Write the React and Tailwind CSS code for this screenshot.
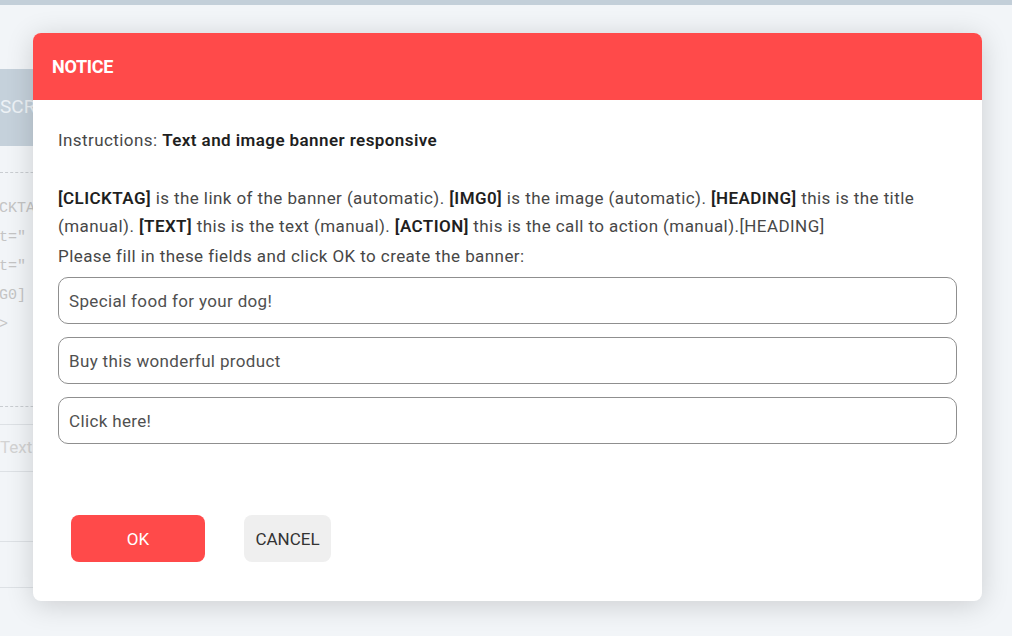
const FONT = { fontFamily: "Roboto, 'Noto Sans', sans-serif" };

const CODE_LINES = ["CKTAG]", "t=\"", "t=\"", "G0]", ">"];

function BackgroundPage() {
    return (
        <div className="min-h-[636px] w-full bg-[#f2f5f8]">
            <div className="h-[5px] bg-[#c3cfd9]" />
            <div className="w-[120px] pt-[64px]">
                <div className="flex h-[77px] items-center bg-[#c5d1db] text-[19px] text-[#edf2f6]">SCRIPT</div>
                <div className="mt-[26px] border-t border-dashed border-[#c9cdd1]" />
                <div className="pt-[21px] font-['Liberation_Mono',monospace] text-[15px] leading-[29px] text-[#c4c4c4]">
                    {CODE_LINES.map((line, i) => (
                        <div key={i} className="-ml-[1px] whitespace-pre">{line}</div>
                    ))}
                </div>
                <div className="mt-[67px] border-t border-dashed border-[#c9cdd1]" />
                <div className="mt-[17px] border-t border-[#dde1e5]" />
                <div className="flex h-[46px] items-center text-[17px] text-[#d3d3d3]">Text</div>
                <div className="border-t border-[#dde1e5]" />
                <div className="mt-[69px] border-t border-[#dde1e5]" />
                <div className="mt-[45px] border-t border-[#dde1e5]" />
            </div>
        </div>
    );
}

function Field({ value }) {
    return (
        <div className="flex h-[47px] items-center rounded-[10px] border border-[#8f8f8f] bg-white px-[10px] text-[17px] tracking-[0.35px] text-[#505050]">
            {value}
        </div>
    );
}

function Strong({ children }) {
    return <b className="font-semibold text-[#1f1f1f]">{children}</b>;
}

function NoticeModal() {
    return (
        <div className="absolute left-[33px] top-[33px] h-[568px] w-[949px] overflow-hidden rounded-[8px] bg-white shadow-[0_4px_28px_rgba(0,0,0,0.16)]">
            <div className="flex h-[67px] items-center bg-[#ff4a4a] px-[19px] text-[18px] font-bold tracking-[-0.3px] text-white">
                NOTICE
            </div>
            <div className="px-[25px] pt-[26px] text-[17px] leading-[28px] tracking-[0.42px] text-[#474747]">
                <p>
                    Instructions: <Strong>Text and image banner responsive</Strong>
                </p>
                <p className="mt-[30px]">
                    <Strong>[CLICKTAG]</Strong> is the link of the banner (automatic). <Strong>[IMG0]</Strong> is the
                    image (automatic). <Strong>[HEADING]</Strong> this is the title (manual). <Strong>[TEXT]</Strong> this
                    is the text (manual). <Strong>[ACTION]</Strong> this is the call to action (manual).[HEADING]
                </p>
                <p className="mt-[2px]">Please fill in these fields and click OK to create the banner:</p>
                <div className="mt-[7px] flex flex-col gap-[13px]">
                    <Field value="Special food for your dog!" />
                    <Field value="Buy this wonderful product" />
                    <Field value="Click here!" />
                </div>
                <div className="mt-[71px] flex gap-[39px] pl-[13px] tracking-normal">
                    <button className="h-[47px] w-[134px] rounded-[8px] bg-[#ff4a4a] text-[17px] text-white">OK</button>
                    <button className="h-[47px] w-[87px] rounded-[8px] bg-[#efefef] text-[17px] text-[#333]">CANCEL</button>
                </div>
            </div>
        </div>
    );
}

export default function App() {
    return (
        <div className="relative h-[636px] w-[1012px] overflow-hidden" style={FONT}>
            <BackgroundPage />
            <NoticeModal />
        </div>
    );
}
